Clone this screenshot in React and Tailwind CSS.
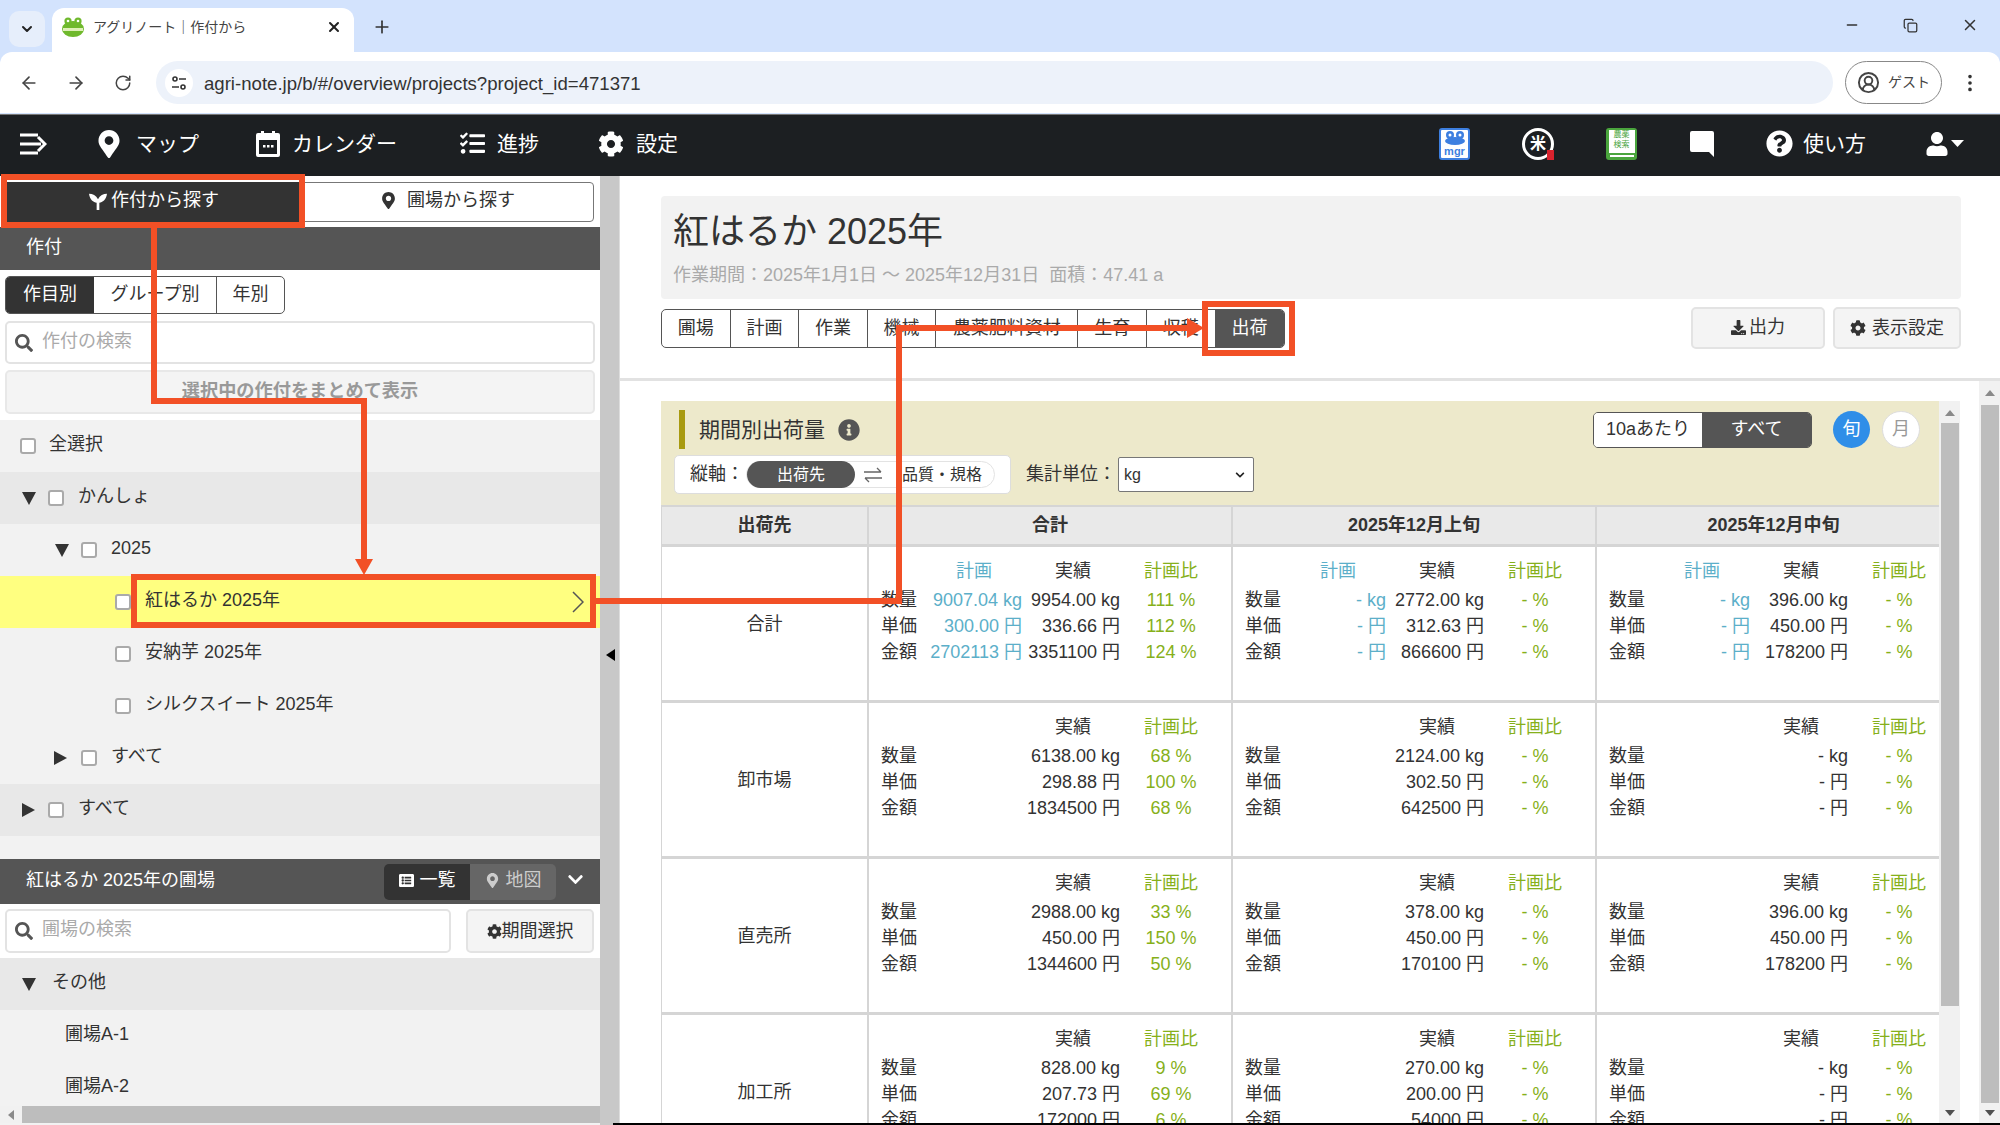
import { ArrowLeft, ArrowRight, RotateCw, ChevronDown, Plus, X, Minus, EllipsisVertical, CircleUserRound, Copy } from 'lucide-react';
import { FaMapMarkerAlt, FaTasks, FaCog, FaQuestionCircle, FaUser, FaSearch, FaDownload, FaInfoCircle, FaChevronDown, FaListAlt } from 'react-icons/fa';

const rows = [
  {
    name: '合計',
    showPlan: true,
    cells: [
      { label: ['9007.04 kg', '300.00 円', '2702113 円'], actual: ['9954.00 kg', '336.66 円', '3351100 円'], ratio: ['111 %', '112 %', '124 %'] },
      { label: ['- kg', '- 円', '- 円'], actual: ['2772.00 kg', '312.63 円', '866600 円'], ratio: ['- %', '- %', '- %'] },
      { label: ['- kg', '- 円', '- 円'], actual: ['396.00 kg', '450.00 円', '178200 円'], ratio: ['- %', '- %', '- %'] },
    ],
  },
  {
    name: '卸市場',
    cells: [
      { actual: ['6138.00 kg', '298.88 円', '1834500 円'], ratio: ['68 %', '100 %', '68 %'] },
      { actual: ['2124.00 kg', '302.50 円', '642500 円'], ratio: ['- %', '- %', '- %'] },
      { actual: ['- kg', '- 円', '- 円'], ratio: ['- %', '- %', '- %'] },
    ],
  },
  {
    name: '直売所',
    cells: [
      { actual: ['2988.00 kg', '450.00 円', '1344600 円'], ratio: ['33 %', '150 %', '50 %'] },
      { actual: ['378.00 kg', '450.00 円', '170100 円'], ratio: ['- %', '- %', '- %'] },
      { actual: ['396.00 kg', '450.00 円', '178200 円'], ratio: ['- %', '- %', '- %'] },
    ],
  },
  {
    name: '加工所',
    cells: [
      { actual: ['828.00 kg', '207.73 円', '172000 円'], ratio: ['9 %', '69 %', '6 %'] },
      { actual: ['270.00 kg', '200.00 円', '54000 円'], ratio: ['- %', '- %', '- %'] },
      { actual: ['- kg', '- 円', '- 円'], ratio: ['- %', '- %', '- %'] },
    ],
  },
];

const units = ['数量', '単価', '金額'];
const tabs = ['圃場', '計画', '作業', '機械', '農薬肥料資材', '生育', '収穫'];

function Check({ className = '' }) {
  return <span className={`mt-[4px] block h-[16px] w-[16px] shrink-0 rounded-[3px] border-2 border-[#aaa] bg-white ${className}`} />;
}

function Tri({ open }) {
  return (
    <svg width="14" height="14" viewBox="0 0 14 14" className="mt-[4px] shrink-0">
      <polygon points={open ? '0,1 14,1 7,14' : '1,0 14,7 1,14'} fill="#333" />
    </svg>
  );
}

function TreeRow({ className, children }) {
  return <div className={`flex h-[52px] items-center pb-[4px] ${className}`}>{children}</div>;
}

function Metric({ cell, showPlan }) {
  return (
    <div className="grid h-full grid-cols-[37px_104px_98px_102px] grid-rows-[29px_26px_26px_26px] content-start pl-[12px] pt-[11px] text-[18px] leading-[26px] text-[#333]">
      <span />
      <span className="pr-[30px] text-right text-[#5cafc9]">{showPlan ? '計画' : ''}</span>
      <span className="pr-[29px] text-right">実績</span>
      <span className="text-center text-[#86b01a]">計画比</span>
      {units.map((u, i) => (
        <div key={u} className="contents">
          <span>{u}</span>
          <span className="whitespace-nowrap text-right text-[#5cafc9]">{cell.label ? cell.label[i] : ''}</span>
          <span className="whitespace-nowrap text-right">{cell.actual[i]}</span>
          <span className="whitespace-nowrap text-center text-[#86b01a]">{cell.ratio[i]}</span>
        </div>
      ))}
    </div>
  );
}

function Scrollbar({ className, thumb }) {
  return (
    <div className={`relative flex shrink-0 flex-col items-center bg-[#f1f1f1] ${className}`}>
      <svg width="10" height="6" viewBox="0 0 10 6" className="absolute top-[9px]"><polygon points="5,0 10,6 0,6" fill="#8a8a8a" /></svg>
      <div className={`w-[18px] bg-[#bdbdbd] ${thumb}`} />
      <svg width="10" height="6" viewBox="0 0 10 6" className="absolute bottom-[9px]"><polygon points="0,0 10,0 5,6" fill="#505050" /></svg>
    </div>
  );
}

function Sprout({ className }) {
  return (
    <svg viewBox="0 0 20 20" className={className} fill="currentColor">
      <path d="M8.5 20V12C5 11.500 1 9 0 2c4 0 8 2 10 6 2-4 6-6 10-6-1 7-5 9.500-8.500 10v8z" />
    </svg>
  );
}

function Frog({ className }) {
  return (
    <svg viewBox="0 0 22 20" className={className}>
      <circle cx="6" cy="4" r="3.6" fill="#6fb92c" />
      <circle cx="16" cy="4" r="3.6" fill="#6fb92c" />
      <ellipse cx="11" cy="12" rx="11" ry="8" fill="#6fb92c" />
      <rect x="1" y="11" width="20" height="3" fill="#dff0b8" />
      <circle cx="6" cy="4" r="1.3" fill="#fff" />
      <circle cx="16" cy="4" r="1.3" fill="#fff" />
    </svg>
  );
}

function CalendarIcon() {
  return (
    <svg width="24" height="26" viewBox="0 0 24 26" className="shrink-0">
      <path d="M2 2h3V0h3v2h8V0h3v2h3a2 2 0 0 1 2 2v20a2 2 0 0 1-2 2H2a2 2 0 0 1-2-2V4a2 2 0 0 1 2-2z" fill="#fff" />
      <rect x="3" y="9" width="18" height="14" fill="#1c1f22" />
      <rect x="7" y="14" width="2.500" height="2.500" fill="#fff" />
      <rect x="11" y="14" width="2.500" height="2.500" fill="#fff" />
      <rect x="15" y="14" width="2.500" height="2.500" fill="#fff" />
    </svg>
  );
}

function Annotations() {
  return (
    <svg viewBox="0 0 2000 1125" className="pointer-events-none absolute left-0 top-0 h-[1125px] w-[2000px]" fill="none" stroke="#f25026" strokeWidth="6">
      <rect x="4" y="177" width="298" height="48" />
      <rect x="134" y="577" width="459" height="48" />
      <rect x="1205" y="304" width="87" height="49" />
      <path d="M154 225V401H364V560" />
      <polygon points="355,559 373,559 364,575" fill="#f25026" stroke="none" />
      <path d="M596 601H899V328H1188" />
      <polygon points="1187,318 1187,338 1204,328" fill="#f25026" stroke="none" />
    </svg>
  );
}

export default function App() {
  return (
    <div className="relative flex h-[1125px] w-[2000px] flex-col overflow-hidden bg-white font-['Liberation_Sans','Noto_Sans_CJK_JP',sans-serif] text-[#333]">
      {/* browser tabs */}
      <div className="flex h-[52px] shrink-0 items-end bg-[#d3e3fd] pl-[9px]">
        <div className="mb-[5px] mr-[7px] flex h-[36px] w-[36px] items-center justify-center rounded-[10px] bg-[#e6eefb]">
          <ChevronDown size={16} strokeWidth={3} className="text-[#222]" />
        </div>
        <div className="flex h-[44px] w-[302px] items-center rounded-t-[12px] bg-white pb-[6px] pl-[10px] pr-[12px]">
          <Frog className="h-[20px] w-[22px]" />
          <span className="ml-[9px] flex-1 text-[14px] text-[#444]">アグリノート｜作付から</span>
          <X size={16} strokeWidth={3} className="text-[#222]" />
        </div>
        <Plus size={20} strokeWidth={2} className="mb-[15px] ml-[18px] text-[#333]" />
        <div className="mb-[18px] ml-auto flex items-center gap-[43px] pr-[21px] text-[#333]">
          <Minus size={16} />
          <Copy size={15} />
          <X size={18} />
        </div>
      </div>

      {/* address bar */}
      <div className="h-[62px] shrink-0 bg-[#d3e3fd]">
        <div className="flex h-[61px] items-center rounded-t-[12px] bg-white pl-[19px] pr-[19px] text-[#444]">
          <ArrowLeft size={20} />
          <ArrowRight size={20} className="ml-[27px]" />
          <RotateCw size={18} className="ml-[28px]" />
          <div className="ml-[24px] flex h-[43px] flex-1 items-center rounded-full bg-[#edf2fa] pl-[9px]">
            <span className="flex h-[28px] w-[28px] items-center justify-center rounded-full bg-white">
              <svg width="16" height="16" viewBox="0 0 16 16" fill="none" stroke="#333" strokeWidth="1.6">
                <circle cx="4" cy="4" r="2" />
                <circle cx="12" cy="12" r="2" />
                <path d="M8 4h7M1 12h7" />
              </svg>
            </span>
            <span className="ml-[11px] pt-[2px] text-[18.6px] text-[#333]">agri-note.jp/b/#/overview/projects?project_id=471371</span>
          </div>
          <div className="ml-[12px] flex h-[43px] w-[97px] items-center justify-center gap-[8px] rounded-full border border-[#888] text-[#444]">
            <CircleUserRound size={23} />
            <span className="text-[14px]">ゲスト</span>
          </div>
          <EllipsisVertical size={22} className="ml-[17px] text-[#333]" />
        </div>
      </div>

      {/* app nav */}
      <header className="flex h-[62px] shrink-0 items-center border-t border-[#777] bg-[#1c1f22] pb-[4px] pl-[20px] text-[21px] text-white">
        <svg width="27" height="24" viewBox="0 0 27 24" fill="none" stroke="#fff" strokeWidth="3">
          <path d="M0 3h18M0 12h21M0 21h18M18 5l7 7-7 7" />
        </svg>
        <FaMapMarkerAlt size={28} className="ml-[48px]" />
        <span className="ml-[13px] w-[120px]">マップ</span>
        <CalendarIcon />
        <span className="ml-[12px] w-[168px]">カレンダー</span>
        <FaTasks size={25} />
        <span className="ml-[12px] w-[101px]">進捗</span>
        <FaCog size={26} />
        <span className="ml-[12px]">設定</span>

        <div className="ml-auto flex items-center pr-[36px]">
          <div className="flex h-[32px] w-[31px] flex-col items-center justify-end rounded-[3px] border-2 border-[#3d7fe0] bg-white pb-[1px]">
            <svg width="22" height="14" viewBox="0 0 22 14">
              <circle cx="6" cy="4" r="4" fill="#3d7fe0" />
              <circle cx="16" cy="4" r="4" fill="#3d7fe0" />
              <circle cx="6" cy="4" r="1.500" fill="#fff" />
              <circle cx="16" cy="4" r="1.500" fill="#fff" />
              <ellipse cx="11" cy="10" rx="10" ry="4" fill="#3d7fe0" />
            </svg>
            <span className="text-[11px] font-bold leading-[12px] text-[#3d7fe0]">mgr</span>
          </div>
          <div className="relative ml-[52px] flex h-[32px] w-[32px] items-center justify-center rounded-full border-[3px] border-white text-[16px] font-bold leading-none">
            米
            <span className="absolute bottom-[-3px] right-[-3px] h-[10px] w-[7px] bg-[#d9232e]" />
          </div>
          <div className="ml-[52px] flex h-[32px] w-[31px] flex-col items-center justify-between rounded-[3px] bg-[#4aa53d] pb-[3px] pt-[2px]">
            <span className="flex h-[23px] w-[26px] flex-col items-center bg-white text-[8px] leading-[10px] text-[#4aa53d]">
              <span>農薬</span>
              <span>検索</span>
            </span>
            <span className="h-[2px] w-[24px] bg-white" />
          </div>
          <svg width="26" height="28" viewBox="0 0 26 28" className="ml-[52px] shrink-0">
            <path d="M3 1h20a2 2 0 0 1 2 2v24l-5-5H3a2 2 0 0 1-2-2V3a2 2 0 0 1 2-2z" fill="#fff" />
          </svg>
          <FaQuestionCircle size={27} className="ml-[51px]" />
          <span className="ml-[10px]">使い方</span>
          <FaUser size={24} className="ml-[59px]" />
          <svg width="13" height="7" viewBox="0 0 13 7" className="ml-[2px]"><polygon points="0,0 13,0 6.5,7" fill="#fff" /></svg>
        </div>
      </header>

      <div className="flex min-h-0 flex-1">
        {/* sidebar */}
        <aside className="relative flex w-[600px] shrink-0 flex-col overflow-hidden bg-[#f2f2f2] text-[18px]">
          <div className="shrink-0 bg-white">
            <div className="flex h-[51px] items-center pl-[7px] pr-[6px]">
              <button className="flex h-[40px] w-[294px] items-center justify-center gap-[4px] bg-[#333] pb-[2px] text-white">
                <Sprout className="h-[18px] w-[18px]" />
                作付から探す
              </button>
              <button className="flex h-[40px] flex-1 items-center justify-center gap-[10px] rounded-r-[4px] border border-[#777] bg-white pb-[2px]">
                <FaMapMarkerAlt size={17} />
                圃場から探す
              </button>
            </div>
            <div className="flex h-[43px] items-center bg-[#555] pb-[2px] pl-[26px] text-white">作付</div>
            <div className="pl-[5px] pr-[5px] pt-[6px]">
              <div className="flex h-[38px] w-[280px] overflow-hidden rounded-[5px] border border-[#555]">
                <span className="flex w-[88px] items-center justify-center bg-[#333] pb-[2px] text-white">作目別</span>
                <span className="flex w-[123px] items-center justify-center border-r border-[#555] pb-[2px]">グループ別</span>
                <span className="flex flex-1 items-center justify-center pb-[2px]">年別</span>
              </div>
              <div className="mt-[7px] flex h-[43px] items-center rounded-[5px] border-2 border-[#e3e3e3] pb-[3px] pl-[8px] text-[#aaa]">
                <FaSearch size={18} className="mt-[3px] text-[#555]" />
                <span className="ml-[9px]">作付の検索</span>
              </div>
              <div className="mt-[6px] flex h-[44px] items-center justify-center rounded-[5px] border-2 border-[#e8e8e8] bg-[#f4f4f4] text-[18.2px] font-bold text-[#999]">
                選択中の作付をまとめて表示
              </div>
            </div>
            <div className="h-[6px]" />
          </div>

          <TreeRow className="gap-[13px] pl-[20px]"><Check />全選択</TreeRow>
          <TreeRow className="bg-[#e8e8e8] pl-[22px]"><Tri open /><Check className="ml-[12px]" /><span className="ml-[14px]">かんしょ</span></TreeRow>
          <TreeRow className="pl-[55px]"><Tri open /><Check className="ml-[12px]" /><span className="ml-[14px]">2025</span></TreeRow>
          <TreeRow className="justify-between bg-[#ffff80] pl-[115px] pr-[16px]">
            <span className="flex items-center gap-[14px]"><Check />紅はるか 2025年</span>
            <svg width="12" height="22" viewBox="0 0 12 22" fill="none" stroke="#555" strokeWidth="1.5" className="mt-[4px]"><path d="M1 1l10 10L1 21" /></svg>
          </TreeRow>
          <TreeRow className="gap-[14px] pl-[115px]"><Check />安納芋 2025年</TreeRow>
          <TreeRow className="gap-[14px] pl-[115px]"><Check />シルクスイート 2025年</TreeRow>
          <TreeRow className="pl-[53px]"><Tri /><Check className="ml-[14px]" /><span className="ml-[14px]">すべて</span></TreeRow>
          <TreeRow className="bg-[#e8e8e8] pl-[21px]"><Tri /><Check className="ml-[13px]" /><span className="ml-[14px]">すべて</span></TreeRow>
          <div className="h-[23px] shrink-0" />

          <div className="flex h-[45px] shrink-0 items-center bg-[#555] pl-[26px] pr-[16px] text-white">
            <span className="flex-1 pb-[3px]">紅はるか 2025年の圃場</span>
            <div className="flex h-[36px] overflow-hidden rounded-[5px]">
              <span className="flex w-[86px] items-center justify-center gap-[6px] bg-[#333] pb-[2px]"><FaListAlt size={15} />一覧</span>
              <span className="flex w-[86px] items-center justify-center gap-[6px] bg-[#666] pb-[2px] text-[#ccc]"><FaMapMarkerAlt size={15} />地図</span>
            </div>
            <FaChevronDown size={17} className="mb-[4px] ml-[11px]" />
          </div>
          <div className="flex h-[54px] shrink-0 items-center justify-between bg-white pl-[5px] pr-[6px]">
            <div className="flex h-[44px] w-[446px] items-center rounded-[5px] border-2 border-[#e3e3e3] pb-[3px] pl-[8px] text-[#aaa]">
              <FaSearch size={18} className="mt-[3px] text-[#555]" />
              <span className="ml-[9px]">圃場の検索</span>
            </div>
            <div className="flex h-[44px] w-[128px] items-center justify-center rounded-[5px] border-2 border-[#e3e3e3] bg-[#f4f4f4]">
              <FaCog size={15} />期間選択
            </div>
          </div>
          <TreeRow className="shrink-0 bg-[#e8e8e8] pl-[22px]"><Tri open /><span className="ml-[16px]">その他</span></TreeRow>
          <TreeRow className="shrink-0 pl-[65px]">圃場A-1</TreeRow>
          <TreeRow className="shrink-0 pl-[65px]">圃場A-2</TreeRow>
          <div className="absolute bottom-[2px] left-0 flex h-[17px] w-[600px] items-center bg-[#f1f1f1]">
            <svg width="6" height="10" viewBox="0 0 6 10" className="ml-[8px]"><polygon points="6,0 6,10 0,5" fill="#8a8a8a" /></svg>
            <div className="ml-[8px] h-full flex-1 bg-[#bdbdbd]" />
          </div>
        </aside>

        {/* splitter */}
        <div className="relative w-[20px] shrink-0 border-r border-[#ddd] bg-[#c8c8c8]">
          <svg width="9" height="12" viewBox="0 0 9 12" className="absolute left-[6px] top-[473px]"><polygon points="9,0 9,12 0,6" fill="#000" /></svg>
        </div>

        {/* main */}
        <main className="flex min-w-0 flex-1 flex-col">
          <div className="h-[205px] shrink-0 border-b-[3px] border-[#e2e2e2] pl-[41px] pr-[39px] pt-[20px]">
            <div className="h-[103px] rounded-[4px] bg-[#f2f2f2] pl-[12px] pt-[12px]">
              <h1 className="text-[36px] font-normal leading-[48px]">紅はるか 2025年</h1>
              <p className="mt-[6px] text-[18px] leading-[26px] text-[#aaa]">作業期間：2025年1月1日 ～ 2025年12月31日&nbsp;&nbsp;面積：47.41 a</p>
            </div>
            <div className="mt-[8px] flex items-start justify-between">
              <div className="mt-[2px] flex h-[39px] overflow-hidden rounded-[5px] border border-[#555] text-[18px]">
                {tabs.map((t, i) => (
                  <span key={t} className={`flex items-center justify-center border-r border-[#555] ${i === 4 ? 'w-[142px]' : 'w-[68.6px]'}`}>{t}</span>
                ))}
                <span className="flex w-[68px] items-center justify-center bg-[#555] text-white">出荷</span>
              </div>
              <div className="flex gap-[8px] text-[18px]">
                <div className="flex h-[42px] w-[134px] items-center justify-center gap-[3px] rounded-[5px] border-2 border-[#e3e3e3] bg-[#f4f4f4] pb-[2px]"><FaDownload size={15} />出力</div>
                <div className="flex h-[42px] w-[128px] items-center justify-center gap-[6px] rounded-[5px] border-2 border-[#e3e3e3] bg-[#f4f4f4]"><FaCog size={16} />表示設定</div>
              </div>
            </div>
          </div>

          <div className="flex min-h-0 flex-1">
            <div className="flex min-w-0 flex-1 pl-[41px] pt-[20px]">
              <div className="flex min-w-0 flex-1 flex-col overflow-hidden">
                <div className="flex h-[104px] shrink-0 flex-col bg-[#ede9cb] pl-[13px] pr-[19px] pt-[9px]">
                  <div className="flex h-[39px] items-center">
                    <span className="ml-[5px] h-[39px] w-[6px] bg-[#a89a10]" />
                    <span className="ml-[14px] text-[21px]">期間別出荷量</span>
                    <FaInfoCircle size={22} className="ml-[13px] text-[#555]" />
                    <div className="ml-auto flex h-[36px] w-[219px] overflow-hidden rounded-[5px] border border-[#555] text-[18px]">
                      <span className="flex w-[108px] items-center justify-center bg-white">10aあたり</span>
                      <span className="flex flex-1 items-center justify-center bg-[#555] text-white">すべて</span>
                    </div>
                    <span className="ml-[21px] flex h-[37px] w-[37px] items-center justify-center rounded-full bg-[#2f8ee8] text-[18px] text-white">旬</span>
                    <span className="ml-[12px] flex h-[37px] w-[38px] items-center justify-center rounded-full border border-[#ddd] bg-white text-[18px] text-[#999]">月</span>
                  </div>
                  <div className="mt-[6px] flex items-center">
                    <div className="flex h-[39px] w-[337px] items-center rounded-[5px] border border-[#ddd] bg-white pl-[15px] text-[18px]">
                      縦軸：
                      <div className="ml-[2px] flex h-[27px] w-[249px] items-center rounded-full border border-[#e3e3e3] text-[16px]">
                        <span className="flex h-[27px] w-[108px] items-center justify-center rounded-full bg-[#555] text-white">出荷先</span>
                        <svg width="20" height="18" viewBox="0 0 20 18" fill="none" stroke="#666" strokeWidth="1.3" className="ml-[8px]"><path d="M1 6h17M14 2l4 4M19 12H2M6 16l-4-4" /></svg>
                        <span className="ml-[19px]">品質・規格</span>
                      </div>
                    </div>
                    <span className="ml-[15px] text-[18px]">集計単位：</span>
                    <div className="ml-[2px] flex h-[35px] w-[136px] items-center justify-between rounded-[2px] border border-[#777] bg-white pl-[5px] pr-[8px] text-[16px]">
                      kg
                      <FaChevronDown size={10} className="text-[#222]" />
                    </div>
                  </div>
                </div>

                <div className="grid grid-cols-[208px_364px_364px_1fr] text-[18px]">
                  {['出荷先', '合計', '2025年12月上旬', '2025年12月中旬'].map((h, i) => (
                    <div key={h} className={`flex h-[42px] items-center justify-center border-y-[2px] border-b-[3px] border-[#d5d5d5] bg-[#e9e9e9] font-bold ${i < 3 ? 'border-r-[2px]' : ''} ${i === 0 ? 'border-l-[1px]' : ''}`}>{h}</div>
                  ))}
                  {rows.map((r) => (
                    <div key={r.name} className="contents">
                      <div className="flex h-[156px] items-center justify-center border-b-[3px] border-l-[1px] border-r-[2px] border-[#d5d5d5] pt-[2px]">{r.name}</div>
                      {r.cells.map((c, j) => (
                        <div key={j} className={`h-[156px] border-b-[3px] border-[#d5d5d5] ${j < 2 ? 'border-r-[2px]' : ''}`}>
                          <Metric cell={c} showPlan={r.showPlan} />
                        </div>
                      ))}
                    </div>
                  ))}
                </div>
              </div>
              <Scrollbar className="w-[21px] pt-[22px]" thumb="h-[583px]" />
            </div>
            <div className="w-[19px] shrink-0" />
            <Scrollbar className="w-[21px] pt-[24px]" thumb="h-[698px]" />
          </div>
        </main>
      </div>

      <div className="absolute bottom-0 left-[613px] h-[2px] w-[1387px] bg-black" />
      <Annotations />
    </div>
  );
}
